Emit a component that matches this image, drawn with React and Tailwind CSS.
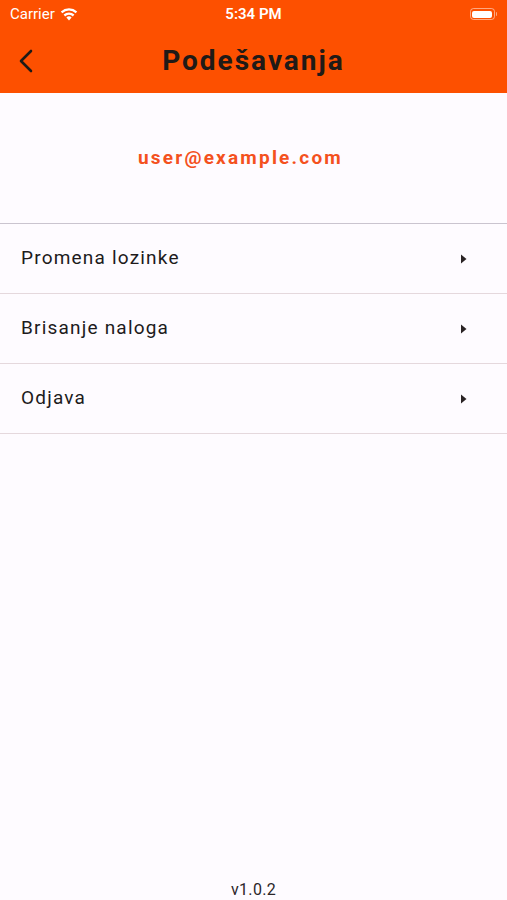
export default function App() {
  const items = ['Promena lozinke', 'Brisanje naloga', 'Odjava'];

  return (
    <div className="h-[900px] w-full bg-[#fefbff] flex flex-col" style={{ fontFamily: 'Roboto, "Liberation Sans", sans-serif' }}>
      <div className="bg-[#fd5000] h-[93px] flex flex-col">
        <div className="h-[28px] flex items-center justify-between px-[10px] text-white text-[15px]">
          <div className="flex items-center gap-[5px] w-[90px]">
            <span>Carrier</span>
            <svg width="18" height="13" viewBox="0 0 18 13">
              <path d="M9 12.5l2.6-3.1a4 4 0 0 0-5.2 0z" fill="white" />
              <path d="M3.6 6.6a8 8 0 0 1 10.8 0l-1.5 1.8a5.7 5.7 0 0 0-7.8 0z" fill="white" />
              <path d="M0.8 3.4a12.3 12.3 0 0 1 16.4 0l-1.5 1.8a10 10 0 0 0-13.4 0z" fill="white" />
            </svg>
          </div>
          <span className="font-semibold">5:34 PM</span>
          <div className="w-[90px] flex justify-end">
            <div className="flex items-center">
              <div className="w-[25px] h-[12px] rounded-[3.5px] border border-white/50 p-[1.5px]">
                <div className="w-full h-full bg-white rounded-[2px]" />
              </div>
              <div className="w-[1.5px] h-[4px] bg-white/50 rounded-r ml-[1px]" />
            </div>
          </div>
        </div>
        <div className="flex-1 flex items-center px-[18px] relative">
          <svg width="18" height="24" viewBox="0 0 18 24" fill="none" stroke="#1f1b16" strokeWidth="2.6" strokeLinecap="round" strokeLinejoin="round">
            <path d="M13 2L3 12l10 10" />
          </svg>
          <div className="absolute inset-0 flex items-center justify-center text-[28px] font-bold text-[#201a17] tracking-[2px]">
            Podešavanja
          </div>
        </div>
      </div>

      <div className="h-[131px] flex items-center justify-center pr-[26px] border-b border-[#cac4cf]">
        <span className="text-[#f4511e] text-[19px] font-bold tracking-[2.2px]">user@example.com</span>
      </div>

      {items.map((item) => (
        <div key={item} className="h-[70px] flex items-center justify-between pl-[21px] pr-[40px] border-b border-[#e5d8dd]">
          <span className="text-[19px] text-[#201a1b] tracking-[1.2px]">{item}</span>
          <svg width="7" height="10" viewBox="0 0 7 10">
            <path d="M1 0.5L6.5 5 1 9.5z" fill="#2a2325" />
          </svg>
        </div>
      ))}

      <div className="flex-1" />
      <div className="h-[24px] mb-[-2px] flex items-start justify-center text-[16px] text-[#2b2629] tracking-[0.3px]">v1.0.2</div>
    </div>
  );
}
